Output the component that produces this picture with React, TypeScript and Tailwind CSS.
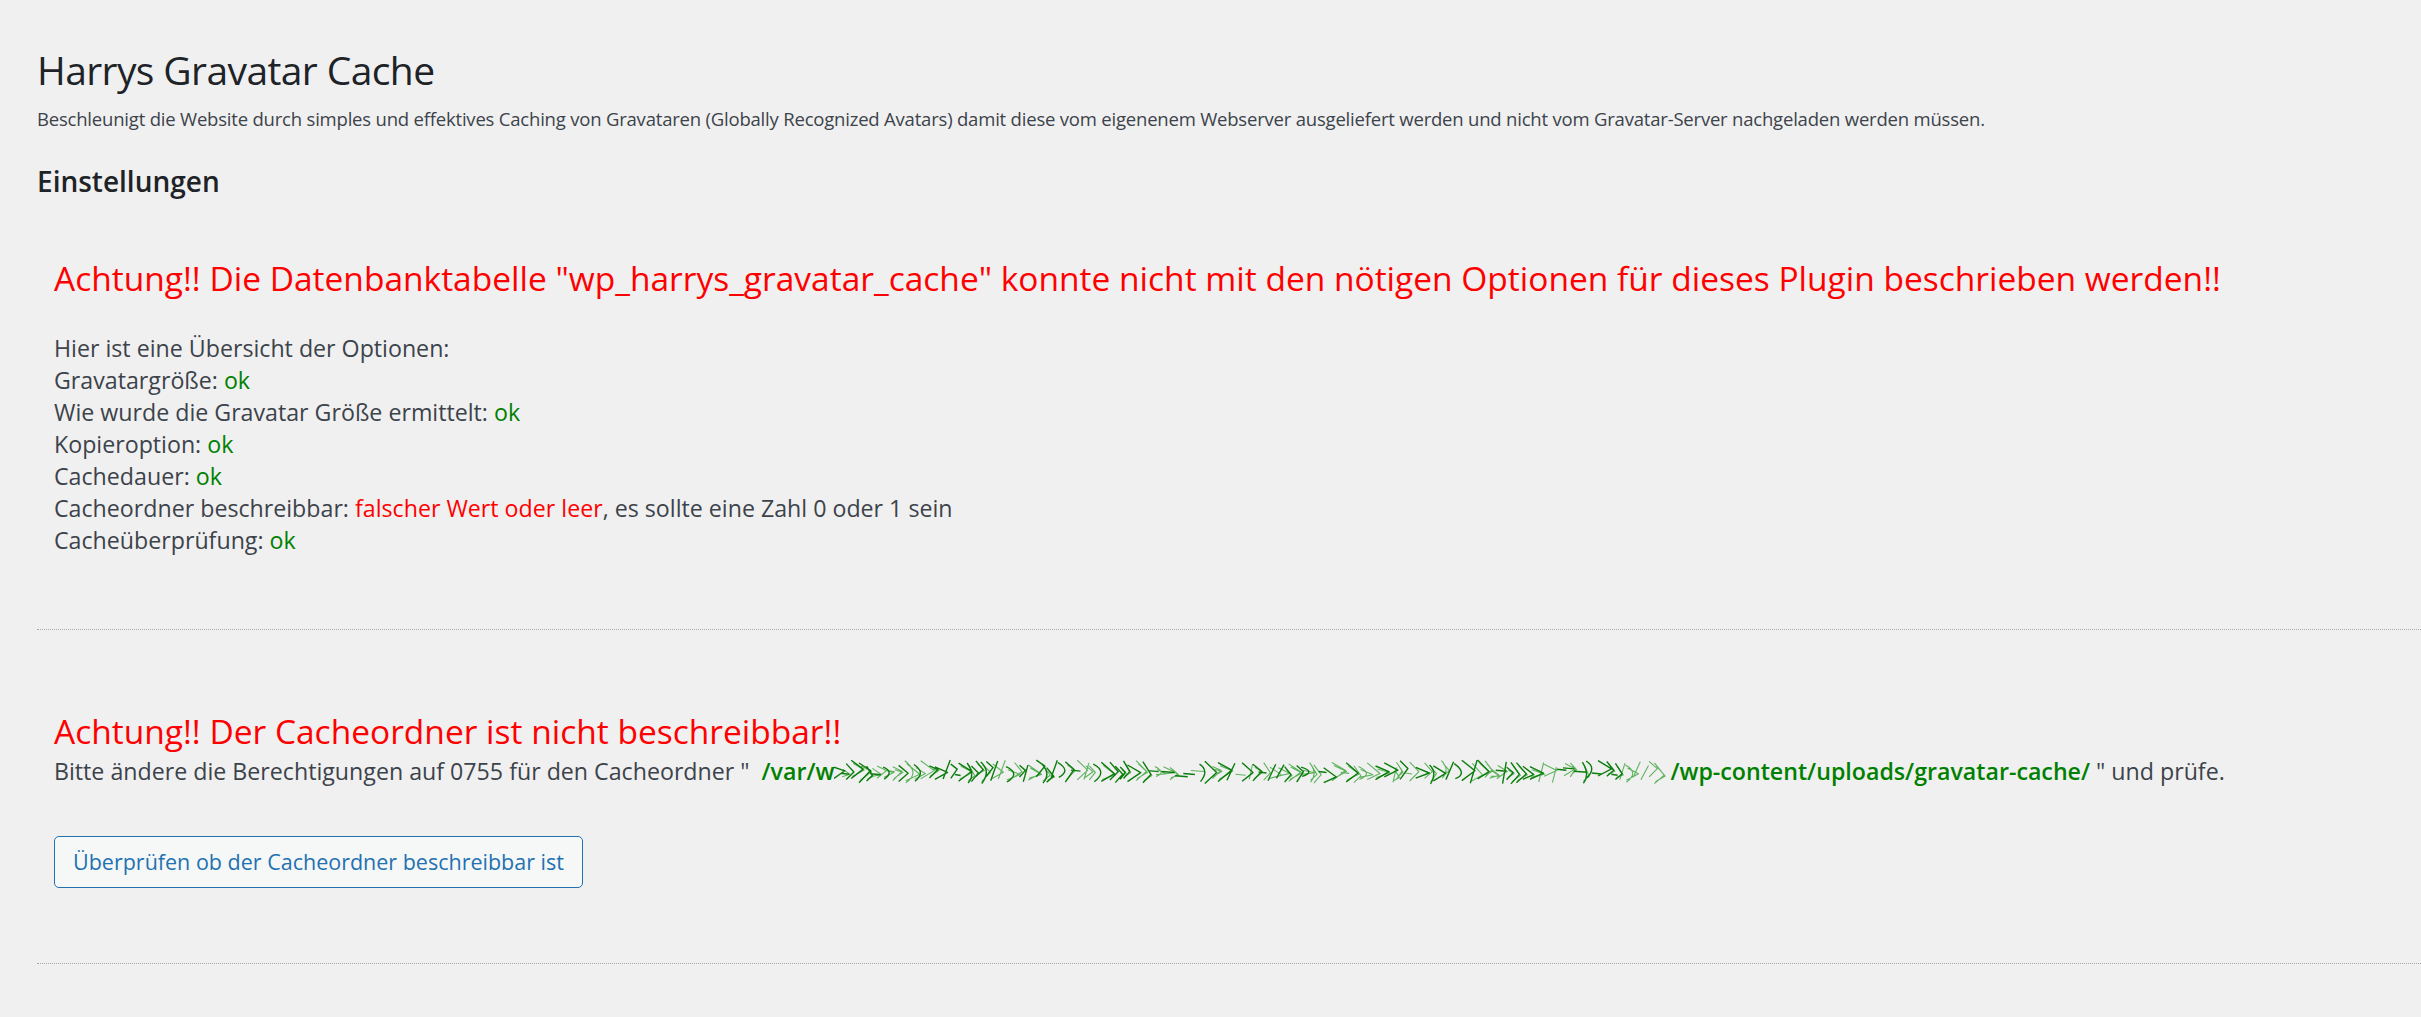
import React from "react";

// Redacted part of the server path: drawn as a green scribble
const Scribble: React.FC<{ width: number }> = ({ width }) => {
  const dark: string[] = [];
  const light: string[] = [];
  let x = 0;
  let seed = 11;
  const rnd = () => {
    seed = (seed * 9301 + 49297) % 233280;
    return seed / 233280;
  };
  const f = (n: number) => n.toFixed(1);
  while (x < width - 12) {
    const w = 5 + rnd() * 9;
    const top = 3 + rnd() * 8;
    const bottom = 19 + rnd() * 8;
    const mid = (top + bottom) / 2 + (rnd() - 0.5) * 5;
    const r = rnd();
    const target = rnd() > 0.35 ? dark : light;
    if (r < 0.55) {
      target.push(`M${f(x)} ${f(top)} L${f(x + w)} ${f(mid)} L${f(x)} ${f(bottom)}`);
    } else if (r < 0.75) {
      target.push(`M${f(x)} ${f(top)} Q${f(x + w + 2)} ${f(mid)} ${f(x + 1)} ${f(bottom)}`);
    } else if (r < 0.88) {
      target.push(`M${f(x)} ${f(mid)} L${f(x + w)} ${f(mid + 1)}`);
    } else {
      target.push(`M${f(x)} ${f(bottom)} L${f(x + w * 0.6)} ${f(top)}`);
    }
    if (rnd() > 0.5) {
      light.push(`M${f(x + 2)} ${f(top + 3)} L${f(x + w + 1)} ${f(mid + 1)} L${f(x + 1)} ${f(bottom - 2)}`);
    }
    x += w * 0.65;
  }
  return (
    <svg width={width} height={30} viewBox={`0 0 ${width} 30`} className="inline-block align-[-7px]">
      <path d={light.join(" ")} fill="none" stroke="#5fb35f" strokeWidth={1.1} strokeLinejoin="round" />
      <path d={dark.join(" ")} fill="none" stroke="#0b7d0b" strokeWidth={1.4} strokeLinejoin="round" />
    </svg>
  );
};

const Ok = () => <span className="text-[#008000]">ok</span>;

const options: { label: string; value: React.ReactNode }[] = [
  { label: "Gravatargröße: ", value: <Ok /> },
  { label: "Wie wurde die Gravatar Größe ermittelt: ", value: <Ok /> },
  { label: "Kopieroption: ", value: <Ok /> },
  { label: "Cachedauer: ", value: <Ok /> },
  {
    label: "Cacheordner beschreibbar: ",
    value: (
      <>
        <span className="text-[#ff0000]">falscher Wert oder leer</span>, es sollte eine Zahl 0 oder 1 sein
      </>
    ),
  },
  { label: "Cacheüberprüfung: ", value: <Ok /> },
];

const App: React.FC = () => {
  return (
    <div
      className="min-h-screen bg-[#f0f0f1] pl-[37px] pt-[46px] text-[#3c434a] overflow-hidden"
      style={{ fontFamily: '"Segoe UI", "Open Sans", "Noto Sans", sans-serif' }}
    >
      {/* Header */}
      <h1 className="text-[39px] leading-[48px] tracking-[-0.6px] font-normal text-[#1d2327] whitespace-nowrap">
        Harrys Gravatar Cache
      </h1>
      <p className="mt-[11px] text-[18.5px] leading-[28px] tracking-[-0.2px] whitespace-nowrap">
        Beschleunigt die Website durch simples und effektives Caching von Gravataren (Globally Recognized Avatars) damit
        diese vom eigenenem Webserver ausgeliefert werden und nicht vom Gravatar-Server nachgeladen werden müssen.
      </p>
      <h2 className="mt-[30px] text-[28px] leading-[36px] font-semibold text-[#1d2327]">Einstellungen</h2>

      {/* Database table warning */}
      <div className="pl-[17px]">
        <h3 className="mt-[57px] text-[33.5px] leading-[44px] text-[#ff0000] whitespace-nowrap">
          Achtung!! Die Datenbanktabelle "wp_harrys_gravatar_cache" konnte nicht mit den nötigen Optionen für dieses
          Plugin beschrieben werden!!
        </h3>
        <div className="mt-[32px] text-[23.2px] leading-[32px]">
          <div>Hier ist eine Übersicht der Optionen:</div>
          {options.map((o, i) => (
            <div key={i} className="whitespace-nowrap">
              {o.label}
              {o.value}
            </div>
          ))}
        </div>
      </div>

      <div className="mt-[73px] border-t border-dotted border-[#a7aaad]" />

      {/* Cache folder warning */}
      <div className="pl-[17px]">
        <h3 className="mt-[79px] text-[33.5px] leading-[44px] text-[#ff0000] whitespace-nowrap">
          Achtung!! Der Cacheordner ist nicht beschreibbar!!
        </h3>
        <p className="mt-[2px] text-[23.2px] leading-[32px] whitespace-nowrap">
          Bitte ändere die Berechtigungen auf 0755 für den Cacheordner "{" "}
          <span className="ml-[6px] font-semibold text-[#008000]">
            /var/w
            <Scribble width={836} />
            /wp-content/uploads/gravatar-cache/
          </span>{" "}
          " und prüfe.
        </p>
        <button className="mt-[49px] h-[52px] px-[18px] rounded-[5px] border border-[#2271b1] bg-[#f6f7f7] text-[21.5px] leading-[50px] text-[#2271b1] whitespace-nowrap">
          Überprüfen ob der Cacheordner beschreibbar ist
        </button>
      </div>

      <div className="mt-[75px] border-t border-dotted border-[#a7aaad]" />
      <div className="h-[60px]" />
    </div>
  );
};

export default App;
